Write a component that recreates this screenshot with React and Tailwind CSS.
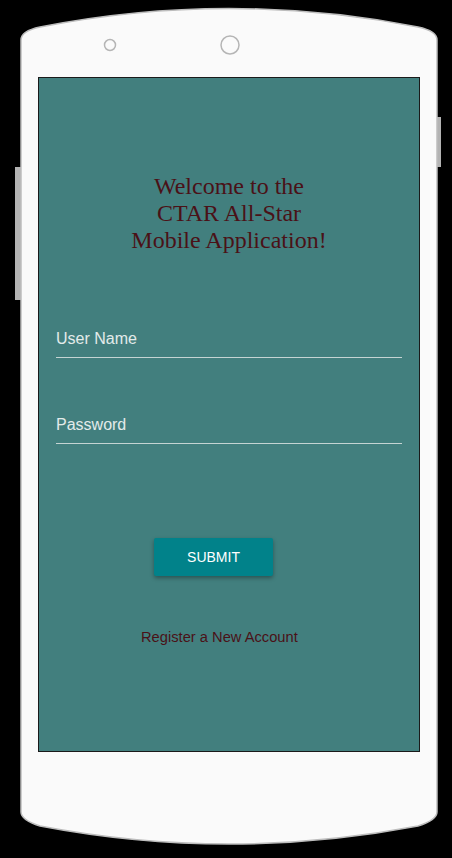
import React from 'react';

function PhoneFrame() {
  return (
    <svg className="absolute inset-0" width="452" height="858" viewBox="0 0 452 858">
      <rect x="15" y="167" width="7" height="133" fill="#b3b3b3" />
      <rect x="435" y="117" width="6" height="50" fill="#b3b3b3" />
      <path
        d="M21 40 Q21 31 40 27 Q229 -10 418 27 Q437 31 437 40 L437 812 Q437 820 418 826 Q229 862 40 826 Q21 820 21 812 Z"
        fill="#fafafa"
        stroke="#bdbdbd"
        strokeWidth="1.5"
      />
      <circle cx="110" cy="45" r="5.5" fill="none" stroke="#b5b5b5" strokeWidth="1.5" />
      <circle cx="230" cy="45" r="9" fill="none" stroke="#b5b5b5" strokeWidth="1.5" />
    </svg>
  );
}

function Field({ label, className }) {
  return (
    <div className={`border-b border-[#c5d4d3] pb-[8px] ${className}`}>
      <div className="text-[16px] leading-[20px] text-[#e2ebea]" style={{ fontFamily: '"Liberation Sans", Arial, sans-serif' }}>
        {label}
      </div>
    </div>
  );
}

export default function App() {
  return (
    <div className="relative w-[452px] h-[858px] bg-black overflow-hidden">
      <PhoneFrame />
      <div className="relative pt-[77px] pl-[38px]">
        <div className="w-[382px] h-[675px] border border-[#1a1a1a] bg-[#427f7e] flex flex-col">
          <h1
            className="mt-[95px] text-center text-[24px] leading-[27px] text-[#4a1117] font-normal"
            style={{ fontFamily: '"Liberation Serif", Georgia, serif' }}
          >
            Welcome to the
            <br />
            CTAR All-Star
            <br />
            Mobile Application!
          </h1>

          <div className="px-[17px]">
            <Field label="User Name" className="mt-[75px]" />
            <Field label="Password" className="mt-[57px]" />
          </div>

          <button
            className="mt-[94px] ml-[115px] w-[119px] h-[38px] bg-[#01828a] rounded-[2px] text-white text-[14px] shadow-[0_2px_4px_rgba(0,0,0,0.35)]"
            style={{ fontFamily: '"Liberation Sans", Arial, sans-serif' }}
          >
            SUBMIT
          </button>

          <div
            className="mt-[51px] ml-[102px] text-[14.7px] leading-[20px] text-[#4a1117]"
            style={{ fontFamily: '"Liberation Sans", Arial, sans-serif' }}
          >
            Register a New Account
          </div>
        </div>
      </div>
    </div>
  );
}
